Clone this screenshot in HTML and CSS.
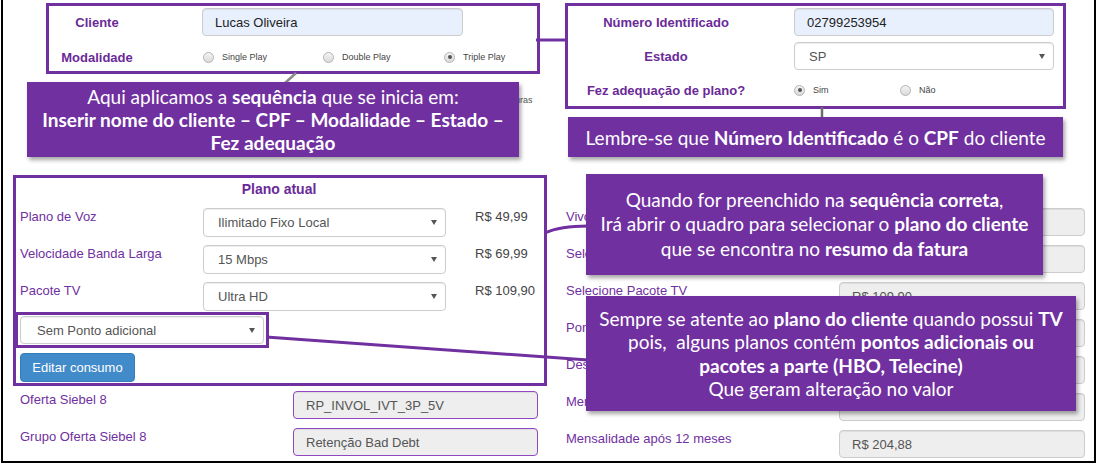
FILE: index.html
```html
<!DOCTYPE html>
<html lang="pt-BR">
<head>
<meta charset="utf-8">
<title>Cadastro</title>
<link rel="stylesheet" href="styles.css">
</head>
<body>
<div class="page">
  <section class="top">
    <div class="top-left">
      <div class="form-grid fg-left">
        <div class="lbl-b">Cliente</div>
        <div class="input autofill">Lucas Oliveira</div>
        <div class="lbl-b">Modalidade</div>
        <div class="radios r-mod">
          <span class="opt"><span class="radio"></span>Single Play</span>
          <span class="opt"><span class="radio"></span>Double Play</span>
          <span class="opt"><span class="radio checked"></span>Triple Play</span>
        </div>
      </div>
      <div class="faint">Faturas</div>
    </div>
    <div class="top-right">
      <div class="form-grid fg-right">
        <div class="lbl-b">Número Identificado</div>
        <div class="input autofill">02799253954</div>
        <div class="lbl-b">Estado</div>
        <div class="select"><span>SP</span><span class="caret"></span></div>
        <div class="lbl-b">Fez adequação de plano?</div>
        <div class="radios r-fez">
          <span class="opt"><span class="radio checked"></span>Sim</span>
          <span class="opt"><span class="radio"></span>Não</span>
        </div>
      </div>
    </div>
  </section>

  <section class="main">
    <div class="col-left">
      <div class="plano">
        <h2 class="plano-title">Plano atual</h2>
        <div class="prow first">
          <div class="lbl">Plano de Voz</div>
          <div class="select"><span>Ilimitado Fixo Local</span><span class="caret"></span></div>
          <div class="price">R$ 49,99</div>
        </div>
        <div class="prow">
          <div class="lbl">Velocidade Banda Larga</div>
          <div class="select"><span>15 Mbps</span><span class="caret"></span></div>
          <div class="price">R$ 69,99</div>
        </div>
        <div class="prow">
          <div class="lbl">Pacote TV</div>
          <div class="select"><span>Ultra HD</span><span class="caret"></span></div>
          <div class="price">R$ 109,90</div>
        </div>
        <div class="select ponto"><span>Sem Ponto adicional</span><span class="caret"></span></div>
        <button class="btn">Editar consumo</button>
      </div>
      <div class="frow first">
        <div class="lbl">Oferta Siebel 8</div>
        <div class="input ro purple">RP_INVOL_IVT_3P_5V</div>
      </div>
      <div class="frow">
        <div class="lbl">Grupo Oferta Siebel 8</div>
        <div class="input ro purple">Retenção Bad Debt</div>
      </div>
    </div>
    <div class="col-right">
      <div class="rrow"><div class="lbl">Vivo Fixo</div><div class="input ro"></div></div>
      <div class="rrow"><div class="lbl">Selecione Banda Larga</div><div class="input ro"></div></div>
      <div class="rrow"><div class="lbl">Selecione Pacote TV</div><div class="input ro">R$ 109,90</div></div>
      <div class="rrow"><div class="lbl">Ponto adicional</div><div class="input ro"></div></div>
      <div class="rrow"><div class="lbl">Desconto</div><div class="input ro"></div></div>
      <div class="rrow"><div class="lbl">Mensalidade</div><div class="input ro"></div></div>
      <div class="rrow"><div class="lbl">Mensalidade após 12 meses</div><div class="input ro">R$ 204,88</div></div>
    </div>
  </section>

  <!-- annotation layer -->
  <div class="frame f1"></div>
  <div class="frame f2"></div>
  <div class="frame f3"></div>
  <div class="frame f4"></div>

  <svg class="links" width="1098" height="465" viewBox="0 0 1098 465" aria-hidden="true">
    <line x1="536" y1="40" x2="567" y2="40" stroke="#7030a0" stroke-width="3"/>
    <line x1="296" y1="73" x2="284" y2="84" stroke="#8a8a8a" stroke-width="2.5"/>
    <line x1="822" y1="107" x2="822" y2="118" stroke="#6d6d6d" stroke-width="2.5"/>
    <path d="M545 233 Q560 226 588 226" fill="none" stroke="#7030a0" stroke-width="3"/>
    <path d="M266 337 L588 360" fill="none" stroke="#7030a0" stroke-width="3"/>
  </svg>

  <div class="callout c1">
    <p>Aqui aplicamos a <b>sequência</b> que se inicia em:</p>
    <p><b>Inserir nome do cliente – CPF – Modalidade – Estado –</b></p>
    <p><b>Fez adequação</b></p>
  </div>
  <div class="callout c2">
    <p>Lembre-se que <b>Número Identificado</b> é o <b>CPF</b> do cliente</p>
  </div>
  <div class="callout c3">
    <p>Quando for preenchido na <b>sequência correta</b>,</p>
    <p>Irá abrir o quadro para selecionar o <b>plano do cliente</b></p>
    <p>que se encontra no <b>resumo da fatura</b></p>
  </div>
  <div class="callout c4">
    <p>Sempre se atente ao <b>plano do cliente</b> quando possui <b>TV</b></p>
    <p>pois,&nbsp; alguns planos contém <b>pontos adicionais ou</b></p>
    <p><b>pacotes a parte (HBO, Telecine)</b></p>
    <p>Que geram alteração no valor</p>
  </div>
</div>
</body>
</html>
```

FILE: styles.css
```css
* { box-sizing: border-box; margin: 0; padding: 0; }

body {
  background: #fff;
  font-family: "Liberation Sans", Arial, sans-serif;
  font-size: 13px;
  color: #333;
  width: 1098px;
  height: 465px;
  overflow: hidden;
}

.page {
  position: relative;
  margin-left: 1px;
  width: 1095px;
  height: 463px;
  border: 2px solid #000;
  border-top: 0;
}

/* ---------- top area ---------- */
.top { display: flex; height: 175px; }

.top-left { width: 563px; padding: 8px 0 0 17px; }
.top-right { width: 520px; padding-top: 8px; }

.form-grid {
  display: grid;
  grid-auto-rows: 28px;
  align-items: center;
}
.fg-left { grid-template-columns: 154px 261px; column-gap: 28px; row-gap: 7px; }
.fg-right { grid-template-columns: 200px 260px; column-gap: 28px; row-gap: 6px; }

.lbl-b {
  text-align: center;
  font-weight: bold;
  font-size: 13px;
  color: #6a2a98;
  white-space: nowrap;
}

.input, .select {
  height: 28px;
  border: 1px solid #ccc;
  border-radius: 4px;
  padding: 0 12px;
  display: flex;
  align-items: center;
  color: #555;
  font-size: 13px;
  background: #fff;
  box-shadow: inset 0 1px 1px rgba(0, 0, 0, .075);
  white-space: nowrap;
}
.input.autofill { background: #e8f0fe; color: #222; }
.input.ro { background: #eee; color: #555; }
.input.ro.purple { border-color: #9048c0; }

.select { justify-content: space-between; padding: 0 8px 0 14px; }
.caret {
  width: 0; height: 0;
  border-left: 3px solid transparent;
  border-right: 3px solid transparent;
  border-top: 5px solid #555;
}

.radios { display: grid; align-items: center; font-size: 9px; color: #444; white-space: nowrap; }
.r-mod { grid-template-columns: 120px 121px auto; padding-left: 1px; }
.r-fez { grid-template-columns: 106px auto; }
.opt { display: flex; align-items: center; gap: 8px; white-space: nowrap; }
.radio {
  flex: none;
  width: 11px; height: 11px;
  border-radius: 50%;
  border: 1px solid #b4b4b4;
  background: linear-gradient(#f4f4f4, #dadada);
  display: inline-flex; align-items: center; justify-content: center;
}
.radio.checked::after {
  content: "";
  width: 4px; height: 4px; border-radius: 50%;
  background: #555;
}

.faint { margin-top: 24px; padding-left: 482px; font-size: 9px; color: #555; }

/* ---------- main area ---------- */
.main {
  display: grid;
  grid-template-columns: 526px 519px;
  column-gap: 20px;
  padding-left: 17px;
}

.lbl { color: #7030a0; font-size: 13px; line-height: 18px; white-space: nowrap; }

.plano { height: 210px; padding: 6px 8px 0 0; }
.plano-title {
  text-align: center;
  font-size: 14px;
  line-height: 16px;
  font-weight: bold;
  color: #6a2a98;
}
.prow {
  display: grid;
  grid-template-columns: 183px 243px auto;
  align-items: start;
  margin-top: 8px;
}
.prow.first { margin-top: 11px; }
.prow .select { height: 29px; }
.price { padding-left: 29px; line-height: 17px; color: #444; }

.select.ponto { width: 244px; margin-top: 5px; padding-left: 16px; }

.btn {
  display: block;
  margin-top: 9px;
  height: 29px;
  width: 115px;
  border: 1px solid #357ebd;
  border-radius: 4px;
  background: #428bca;
  color: #fff;
  font-family: "Liberation Sans", Arial, sans-serif;
  font-size: 13px;
}

.frow {
  display: grid;
  grid-template-columns: 273px 245px;
  align-items: start;
  margin-top: 9px;
}
.frow.first { margin-top: 6px; }

.col-right { padding-top: 33px; display: flex; flex-direction: column; gap: 9px; }
.rrow { display: grid; grid-template-columns: 273px 246px; align-items: start; }

/* ---------- annotation layer ---------- */
.frame {
  position: absolute;
  border: 3px solid #7030a0;
}
.f1 { left: 43px; top: 3px; width: 494px; height: 71px; }
.f2 { left: 562px; top: 3px; width: 501px; height: 106px; }
.f3 { left: 10px; top: 175px; width: 534px; height: 211px; }
.f4 { left: 12px; top: 312px; width: 254px; height: 36px; }

.links { position: absolute; left: -3px; top: 0; pointer-events: none; }

.callout {
  position: absolute;
  background: #7030a0;
  color: #fff;
  font-family: Lato, "Noto Sans", sans-serif;
  font-size: 19px;
  text-align: center;
  white-space: nowrap;
  display: flex;
  flex-direction: column;
  justify-content: center;
  box-shadow: 2px 3px 4px rgba(0, 0, 0, .35);
}
.callout b { font-weight: bold; }
.c1 { left: 24px; top: 82px; width: 492px; height: 75px; line-height: 23px; }
.c2 { left: 565px; top: 117px; width: 495px; height: 40px; line-height: 23px; }
.c3 { left: 583px; top: 174px; width: 457px; height: 101px; line-height: 24.5px; }
.c4 { left: 583px; top: 296px; width: 490px; height: 115px; line-height: 23.5px; }
```
